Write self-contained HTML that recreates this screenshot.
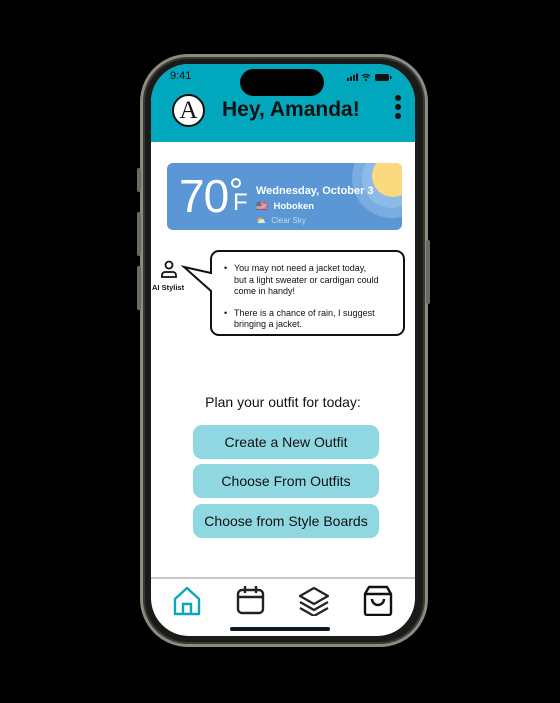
<!DOCTYPE html>
<html><head><style>
*{margin:0;padding:0;box-sizing:border-box}
body{width:560px;height:703px;background:#000;position:relative;overflow:hidden;font-family:"Liberation Sans",sans-serif}
.frame{position:absolute;left:140px;top:54px;width:288px;height:593px;border-radius:48px;background:#1a1a18;border:3px solid #8d8a80;box-shadow:inset 0 0 0 2px #3a3934}
.screen{position:absolute;left:151px;top:64px;width:264px;height:572px;border-radius:38px;background:#fff;overflow:hidden}
.hdr{position:absolute;left:0;top:0;width:264px;height:78px;background:#00a7bd}
.abs{position:absolute}
.btn{position:absolute;left:42px;width:186px;height:34px;background:#8fd8e1;border-radius:9px;font-size:14px;color:#111;text-align:center;line-height:34px}
</style></head><body>
<div class="frame"></div>
<div class="abs" style="left:137px;top:168px;width:4px;height:24px;background:#6d6a62;border-radius:2px"></div>
<div class="abs" style="left:137px;top:212px;width:4px;height:44px;background:#6d6a62;border-radius:2px"></div>
<div class="abs" style="left:137px;top:266px;width:4px;height:44px;background:#6d6a62;border-radius:2px"></div>
<div class="abs" style="left:426px;top:240px;width:4px;height:64px;background:#6d6a62;border-radius:2px"></div>
<div class="screen">
 <div class="hdr"></div>
 <div class="abs" style="left:19px;top:6px;font-size:11px;color:#111">9:41</div>
 <div class="abs" style="left:89px;top:5px;width:84px;height:27px;background:#000;border-radius:14px"></div>
 <svg class="abs" style="left:196px;top:8px" width="46" height="10" viewBox="0 0 46 10"><rect x="0" y="6" width="2" height="3" fill="#111"/><rect x="3" y="4.5" width="2" height="4.5" fill="#111"/><rect x="6" y="3" width="2" height="6" fill="#111"/><rect x="9" y="1.5" width="2" height="7.5" fill="#111"/><path d="M15 4a6 6 0 0 1 8 0M16.5 5.8a3.5 3.5 0 0 1 5 0" stroke="#111" stroke-width="1.3" fill="none"/><circle cx="19" cy="8" r="1" fill="#111"/><rect x="28" y="2" width="14" height="7" rx="2" fill="#111"/><rect x="43" y="4" width="1.5" height="3" fill="#111"/></svg>
 <div class="abs" style="left:21px;top:30px;width:33px;height:33px;border-radius:50%;background:#fff;border:2px solid #111;font-family:'Liberation Serif',serif;font-size:25px;text-align:center;line-height:30px;color:#111">A</div>
 <div class="abs" style="left:71px;top:34px;font-size:21px;font-weight:bold;color:#111">Hey, Amanda!</div>
 <div class="abs" style="left:244px;top:31px;width:6px;height:6px;border-radius:50%;background:#111"></div>
 <div class="abs" style="left:244px;top:40px;width:6px;height:6px;border-radius:50%;background:#111"></div>
 <div class="abs" style="left:244px;top:49px;width:6px;height:6px;border-radius:50%;background:#111"></div>
 <div class="abs" style="left:16px;top:99px;width:235px;height:67px;background:#5b97d4;border-radius:6px;overflow:hidden">
  <div class="abs" style="left:185px;top:-25px;width:80px;height:80px;border-radius:50%;background:#7aace0"></div>
  <div class="abs" style="left:195px;top:-15px;width:60px;height:60px;border-radius:50%;background:#8dbbe8"></div>
  <div class="abs" style="left:205px;top:-8px;width:42px;height:42px;border-radius:50%;background:#fbd97e"></div>
  <div class="abs" style="left:12px;top:8px;font-size:46px;color:#fff;line-height:50px;letter-spacing:-1px">70</div>
  <div class="abs" style="left:64px;top:15px;width:10px;height:10px;border:2px solid #fff;border-radius:50%"></div>
  <div class="abs" style="left:66px;top:27px;font-size:24px;color:#fff;line-height:26px">F</div>
  <div class="abs" style="left:89px;top:22px;font-size:11px;font-weight:bold;color:#fff">Wednesday, October 3</div>
  <div class="abs" style="left:89px;top:38px;font-size:9.5px;color:#fff">🇺🇸 <b style="font-weight:bold;margin-left:3px">Hoboken</b></div>
  <div class="abs" style="left:89px;top:53px;font-size:8px;color:#c4daf0">⛅ <span style="margin-left:3px">Clear Sky</span></div>
 </div>
 <svg class="abs" style="left:8px;top:196px" width="20" height="18" viewBox="0 0 20 18"><circle cx="10" cy="5" r="3.5" fill="none" stroke="#111" stroke-width="1.8"/><path d="M3 17v-2a3 3 0 0 1 3-3h8a3 3 0 0 1 3 3v2z" fill="none" stroke="#111" stroke-width="1.8"/></svg>
 <div class="abs" style="left:1px;top:219px;font-size:7.5px;font-weight:bold;color:#111">AI Stylist</div>
 <svg class="abs" style="left:30px;top:185px" width="230" height="95" viewBox="0 0 230 95"><path d="M38 2h177a8 8 0 0 1 8 8v68a8 8 0 0 1-8 8H38a8 8 0 0 1-8-8V42L3 18l27 6V10a8 8 0 0 1 8-8z" fill="#fff" stroke="#111" stroke-width="2"/></svg>
 <div class="abs" style="left:72px;top:199px;width:178px;font-size:9px;line-height:11.5px;color:#111">
  <div style="padding-left:11px;position:relative"><span style="position:absolute;left:1px">•</span>You may not need a jacket today,<br>but a light sweater or cardigan could<br>come in handy!</div>
  <div style="padding-left:11px;position:relative;margin-top:10px"><span style="position:absolute;left:1px">•</span>There is a chance of rain, I suggest<br>bringing a jacket.</div>
 </div>
 <div class="abs" style="left:0;width:264px;top:330px;text-align:center;font-size:14px;color:#111">Plan your outfit for today:</div>
 <div class="btn" style="top:361px">Create a New Outfit</div>
 <div class="btn" style="top:400px">Choose From Outfits</div>
 <div class="btn" style="top:440px">Choose from Style Boards</div>
 <div class="abs" style="left:0;top:513px;width:264px;height:2px;background:#c8c8c8"></div>
 <svg class="abs" style="left:22px;top:522px" width="28" height="30" viewBox="0 0 28 30"><path d="M2 13L14 2l12 11v15H2z" fill="none" stroke="#0aa6bd" stroke-width="2.4" stroke-linejoin="round"/><path d="M10 28V18h8v10" fill="none" stroke="#0aa6bd" stroke-width="2.4"/></svg>
 <svg class="abs" style="left:85px;top:521px" width="30" height="31" viewBox="0 0 30 31"><rect x="2" y="5" width="25" height="23" rx="4" fill="none" stroke="#222" stroke-width="2.4"/><path d="M2 12h25M9 1v7M20 1v7" stroke="#222" stroke-width="2.4"/></svg>
 <svg class="abs" style="left:147px;top:522px" width="32" height="30" viewBox="0 0 32 30"><path d="M16 2L30 10 16 18 2 10z" fill="none" stroke="#222" stroke-width="2.2" stroke-linejoin="round"/><path d="M2 16l14 8 14-8M2 22l14 8 14-8" fill="none" stroke="#222" stroke-width="2.2" stroke-linejoin="round"/></svg>
 <svg class="abs" style="left:212px;top:521px" width="30" height="31" viewBox="0 0 30 31"><path d="M6 2h18l4 7v19a2 2 0 0 1-2 2H4a2 2 0 0 1-2-2V9z" fill="none" stroke="#111" stroke-width="2.4" stroke-linejoin="round"/><path d="M2 9h26M9 14a6 6 0 0 0 12 0" fill="none" stroke="#111" stroke-width="2.4"/></svg>
 <div class="abs" style="left:79px;top:563px;width:100px;height:4px;border-radius:2px;background:#0d1a26"></div>
</div>
</body></html>
